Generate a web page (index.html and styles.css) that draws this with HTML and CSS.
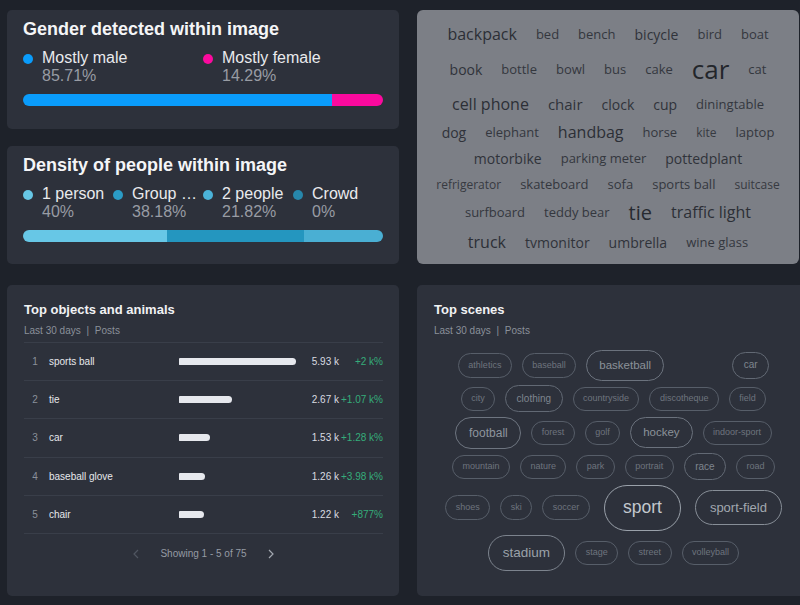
FILE: index.html
```html
<!DOCTYPE html>
<html>
<head>
    <meta charset="UTF-8">
    <title>Image insights</title>
    <link rel="stylesheet" href="styles.css">
</head>
<body>
    <div class="dashboard">
        <div class="stack">
            <section class="card stat-card">
                <h2 class="stat-title">Gender detected within image</h2>
                <div class="legend legend-2">
                    <div class="legend-item">
                        <span class="dot dot-male"></span>
                        <div class="legend-text">
                            <div class="legend-label">Mostly male</div>
                            <div class="legend-value">85.71%</div>
                        </div>
                    </div>
                    <div class="legend-item">
                        <span class="dot dot-female"></span>
                        <div class="legend-text">
                            <div class="legend-label">Mostly female</div>
                            <div class="legend-value">14.29%</div>
                        </div>
                    </div>
                </div>
                <div class="split-bar">
                    <span class="seg seg-male" style="width: 85.71%"></span>
                    <span class="seg seg-female" style="width: 14.29%"></span>
                </div>
            </section>

            <section class="card stat-card">
                <h2 class="stat-title">Density of people within image</h2>
                <div class="legend legend-4">
                    <div class="legend-item">
                        <span class="dot dot-one"></span>
                        <div class="legend-text">
                            <div class="legend-label">1 person</div>
                            <div class="legend-value">40%</div>
                        </div>
                    </div>
                    <div class="legend-item">
                        <span class="dot dot-group"></span>
                        <div class="legend-text">
                            <div class="legend-label" title="Group of people">Group …</div>
                            <div class="legend-value">38.18%</div>
                        </div>
                    </div>
                    <div class="legend-item">
                        <span class="dot dot-two"></span>
                        <div class="legend-text">
                            <div class="legend-label">2 people</div>
                            <div class="legend-value">21.82%</div>
                        </div>
                    </div>
                    <div class="legend-item">
                        <span class="dot dot-crowd"></span>
                        <div class="legend-text">
                            <div class="legend-label">Crowd</div>
                            <div class="legend-value">0%</div>
                        </div>
                    </div>
                </div>
                <div class="split-bar">
                    <span class="seg seg-one" style="width: 40%"></span>
                    <span class="seg seg-group" style="width: 38.18%"></span>
                    <span class="seg seg-two" style="width: 21.82%"></span>
                </div>
            </section>
        </div>

        <section class="card cloud-card">
            <div class="cloud-row h30">
                <span class="w16">backpack</span><span class="w13">bed</span><span class="w13">bench</span><span class="w14">bicycle</span><span class="w13">bird</span><span class="w13">boat</span>
            </div>
            <div class="cloud-row h40">
                <span class="w14">book</span><span class="w13">bottle</span><span class="w13">bowl</span><span class="w13">bus</span><span class="w13">cake</span><span class="w26">car</span><span class="w13">cat</span>
            </div>
            <div class="cloud-row h30">
                <span class="w16">cell phone</span><span class="w15">chair</span><span class="w14">clock</span><span class="w14">cup</span><span class="w13">diningtable</span>
            </div>
            <div class="cloud-row">
                <span class="w14">dog</span><span class="w13">elephant</span><span class="w16">handbag</span><span class="w13">horse</span><span class="w12">kite</span><span class="w13">laptop</span>
            </div>
            <div class="cloud-row">
                <span class="w14">motorbike</span><span class="w13">parking meter</span><span class="w14">pottedplant</span>
            </div>
            <div class="cloud-row">
                <span class="w12">refrigerator</span><span class="w13">skateboard</span><span class="w13">sofa</span><span class="w13">sports ball</span><span class="w12">suitcase</span>
            </div>
            <div class="cloud-row h30">
                <span class="w13">surfboard</span><span class="w13">teddy bear</span><span class="w20">tie</span><span class="w16">traffic light</span>
            </div>
            <div class="cloud-row h30">
                <span class="w16">truck</span><span class="w14">tvmonitor</span><span class="w14">umbrella</span><span class="w13">wine glass</span>
            </div>
        </section>

        <section class="card panel">
            <h3 class="panel-title">Top objects and animals</h3>
            <div class="panel-sub">Last 30 days <span class="sep">|</span> Posts</div>
            <div class="rank-list">
                <div class="rank-row">
                    <span class="rank-num">1</span>
                    <span class="rank-label">sports ball</span>
                    <span class="rank-track"><span class="rank-bar" style="width: 117px"></span></span>
                    <span class="rank-value">5.93 k</span>
                    <span class="rank-change">+2 k%</span>
                </div>
                <div class="rank-row">
                    <span class="rank-num">2</span>
                    <span class="rank-label">tie</span>
                    <span class="rank-track"><span class="rank-bar" style="width: 53px"></span></span>
                    <span class="rank-value">2.67 k</span>
                    <span class="rank-change">+1.07 k%</span>
                </div>
                <div class="rank-row">
                    <span class="rank-num">3</span>
                    <span class="rank-label">car</span>
                    <span class="rank-track"><span class="rank-bar" style="width: 31px"></span></span>
                    <span class="rank-value">1.53 k</span>
                    <span class="rank-change">+1.28 k%</span>
                </div>
                <div class="rank-row">
                    <span class="rank-num">4</span>
                    <span class="rank-label">baseball glove</span>
                    <span class="rank-track"><span class="rank-bar" style="width: 26px"></span></span>
                    <span class="rank-value">1.26 k</span>
                    <span class="rank-change">+3.98 k%</span>
                </div>
                <div class="rank-row">
                    <span class="rank-num">5</span>
                    <span class="rank-label">chair</span>
                    <span class="rank-track"><span class="rank-bar" style="width: 25px"></span></span>
                    <span class="rank-value">1.22 k</span>
                    <span class="rank-change">+877%</span>
                </div>
            </div>
            <div class="pager">
                <svg class="pager-arrow off" width="6" height="10" viewBox="0 0 6 10"><polyline points="5,1 1,5 5,9" fill="none" stroke="currentColor" stroke-width="1.2"/></svg>
                <span class="pager-text">Showing 1 - 5 of 75</span>
                <svg class="pager-arrow" width="6" height="10" viewBox="0 0 6 10"><polyline points="1,1 5,5 1,9" fill="none" stroke="currentColor" stroke-width="1.2"/></svg>
            </div>
        </section>

        <section class="card panel">
            <h3 class="panel-title">Top scenes</h3>
            <div class="panel-sub">Last 30 days <span class="sep">|</span> Posts</div>
            <div class="bubbles">
                <div class="bubble-row">
                    <span class="bubble b9">athletics</span>
                    <span class="bubble b9">baseball</span>
                    <span class="bubble b11">basketball</span>
                    <span class="bubble b10 push-l">car</span>
                </div>
                <div class="bubble-row">
                    <span class="bubble b9">city</span>
                    <span class="bubble b10">clothing</span>
                    <span class="bubble b9">countryside</span>
                    <span class="bubble b9">discotheque</span>
                    <span class="bubble b9">field</span>
                </div>
                <div class="bubble-row">
                    <span class="bubble b12">football</span>
                    <span class="bubble b9">forest</span>
                    <span class="bubble b9">golf</span>
                    <span class="bubble b11">hockey</span>
                    <span class="bubble b9">indoor-sport</span>
                </div>
                <div class="bubble-row">
                    <span class="bubble b9">mountain</span>
                    <span class="bubble b9">nature</span>
                    <span class="bubble b9">park</span>
                    <span class="bubble b9">portrait</span>
                    <span class="bubble b10">race</span>
                    <span class="bubble b9">road</span>
                </div>
                <div class="bubble-row">
                    <span class="bubble b9">shoes</span>
                    <span class="bubble b9">ski</span>
                    <span class="bubble b9">soccer</span>
                    <span class="bubble b18">sport</span>
                    <span class="bubble b13">sport-field</span>
                </div>
                <div class="bubble-row">
                    <span class="bubble b14">stadium</span>
                    <span class="bubble b9">stage</span>
                    <span class="bubble b9">street</span>
                    <span class="bubble b9">volleyball</span>
                </div>
            </div>
        </section>
    </div>
</body>
</html>
```

FILE: styles.css
```css
html, body {
    margin: 0;
    overflow: hidden;
}
body {
    width: 800px;
    height: 605px;
    background: #1e222a;
    font-family: "Liberation Sans", Arial, sans-serif;
    color: #e8e9ec;
}
.dashboard {
    display: grid;
    grid-template-columns: 392px 392px;
    grid-template-rows: 254px 311px;
    column-gap: 18px;
    row-gap: 21px;
    padding: 10px 0 0 7px;
    width: max-content;
}
.card {
    background: #2d313b;
    border-radius: 5px;
    box-sizing: border-box;
}

/* top left stat cards */
.stack {
    display: flex;
    flex-direction: column;
    gap: 17px;
}
.stat-card {
    height: 118.5px;
    padding: 8px 16px 0 16px;
}
.stat-title {
    margin: 0;
    font-size: 18px;
    line-height: 22px;
    font-weight: bold;
    color: #f4f5f7;
}
.legend {
    display: grid;
    margin-top: 9px;
}
.legend-2 {
    grid-template-columns: repeat(2, 1fr);
}
.legend-4 {
    grid-template-columns: repeat(4, 1fr);
}
.legend-item {
    display: flex;
    gap: 9px;
    min-width: 0;
}
.dot {
    flex: none;
    width: 10px;
    height: 10px;
    border-radius: 50%;
    margin-top: 5px;
}
.legend-text {
    min-width: 0;
    font-size: 16px;
    line-height: 18px;
}
.legend-label {
    color: #e9eaed;
    white-space: nowrap;
}
.legend-value {
    color: #989ca4;
}
.split-bar {
    display: flex;
    height: 12px;
    margin-top: 9px;
    border-radius: 6px;
    overflow: hidden;
}
.seg {
    display: block;
    height: 100%;
}
.dot-male, .seg-male { background: #0a9cfb; }
.dot-female, .seg-female { background: #fb0a9e; }
.dot-one, .seg-one { background: #67c7e6; }
.dot-group { background: #2b9cc6; }
.seg-group { background: #2496bf; }
.dot-two { background: #4bb3d9; }
.seg-two { background: #4aafd3; }
.dot-crowd { background: #2787ab; }

/* word cloud */
.cloud-card {
    width: 382px;
    background: #7c7f86;
    border-radius: 6px;
    padding-top: 9px;
    font-family: "Open Sans", sans-serif;
    color: #30333a;
}
.cloud-row {
    display: flex;
    justify-content: center;
    align-items: center;
    gap: 19px;
    height: 26px;
}
.cloud-row.h30 { height: 30px; }
.cloud-row.h40 { height: 40px; }
.w12 { font-size: 12px; color: #373a41; }
.w13 { font-size: 13px; color: #34373e; }
.w14 { font-size: 14px; }
.w15 { font-size: 15px; }
.w16 { font-size: 16px; color: #2c2f36; }
.w20 { font-size: 20px; color: #272a30; }
.w26 { font-size: 26px; color: #23262b; }

/* bottom panels */
.panel {
    padding: 17px 16px 0 17px;
}
.panel-title {
    margin: 0;
    font-size: 13px;
    line-height: 15px;
    font-weight: bold;
    color: #f1f2f4;
}
.panel-sub {
    margin-top: 8px;
    font-size: 10px;
    line-height: 12px;
    color: #8a909a;
}
.sep {
    margin: 0 3px;
}
.rank-list {
    margin-top: 5px;
    border-top: 1px solid #393e49;
}
.rank-row {
    display: grid;
    grid-template-columns: 22px 133px 1fr 40px 44px;
    align-items: center;
    height: 38.2px;
    box-sizing: border-box;
    border-bottom: 1px solid #393e49;
    font-size: 10px;
}
.rank-num {
    text-align: center;
    color: #8a909a;
}
.rank-label {
    padding-left: 3px;
    color: #e6e8eb;
}
.rank-track {
    display: flex;
}
.rank-bar {
    display: block;
    height: 7px;
    background: #e6e8ed;
    border-radius: 1px 4px 4px 1px;
}
.rank-value {
    text-align: right;
    color: #d9dce1;
}
.rank-change {
    text-align: right;
    color: #35ad7a;
}
.pager {
    display: flex;
    justify-content: center;
    align-items: center;
    gap: 21px;
    height: 40px;
    font-size: 10px;
    color: #959ba4;
}
.pager-arrow {
    color: #a2a8b0;
}
.pager-arrow.off {
    color: #505661;
}

/* scene bubbles */
.bubbles {
    display: flex;
    flex-direction: column;
    gap: 4.5px;
    margin-top: 13px;
}
.bubble-row {
    display: flex;
    justify-content: center;
    align-items: center;
    gap: 10px;
}
.bubble {
    padding: 0.75em 1.05em;
    line-height: 1;
    border: 1px solid #575e69;
    border-radius: 999px;
    color: #6d747e;
    white-space: nowrap;
}
.b9 { font-size: 9px; }
.b10 { font-size: 10px; border-color: #626974; color: #7e858e; }
.b11 { font-size: 11.5px; border-color: #6b727d; color: #8b9199; }
.b12 { font-size: 12px; border-color: #6e7580; color: #8e949d; }
.b13 { font-size: 13px; border-color: #878e97; color: #a2a8b0; }
.b14 { font-size: 13.5px; border-color: #7c838d; color: #9ba1a9; }
.b18 { font-size: 17.5px; border: 1.5px solid #9aa1aa; color: #c3c8ce; margin: 0 4px; }
.push-l { margin-left: 58px; }
```
